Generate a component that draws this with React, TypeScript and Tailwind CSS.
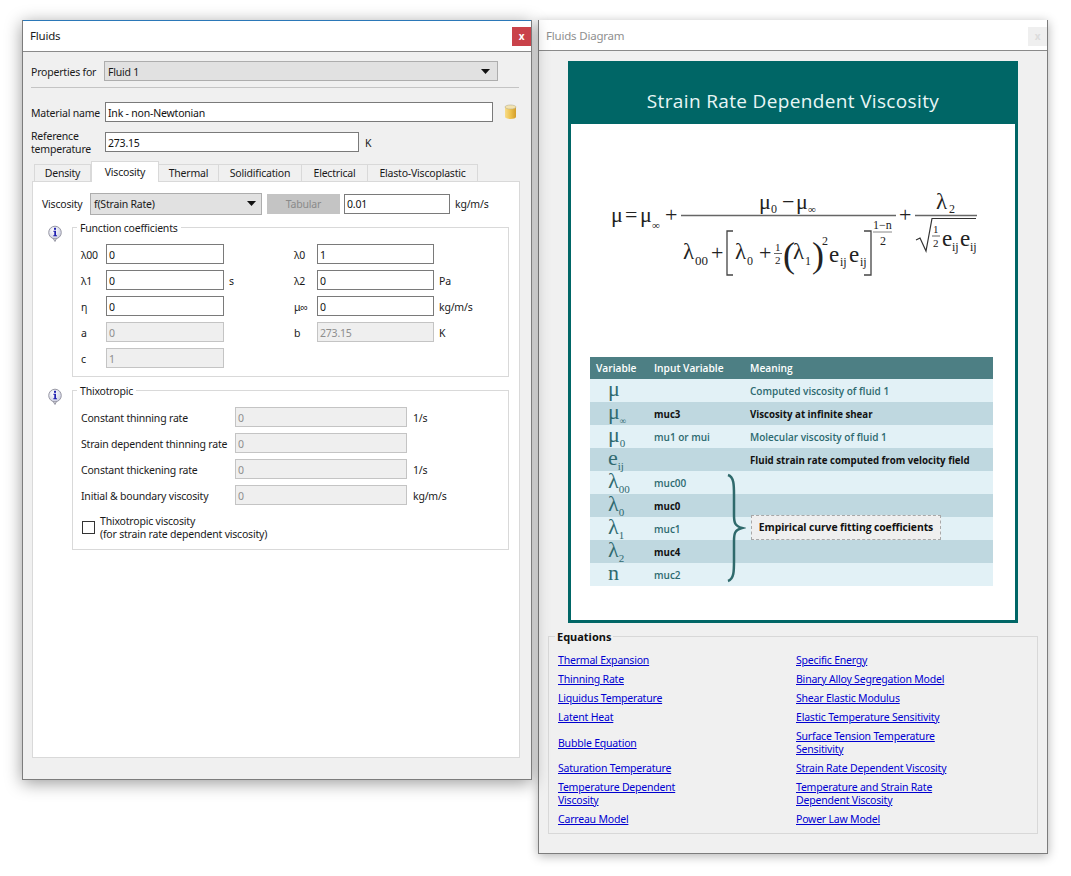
import React from "react";

function Info() {
  return (
    <svg width="16" height="18" viewBox="0 0 16 18" className="shrink-0">
      <defs>
        <radialGradient id="inf" cx="0.4" cy="0.35" r="0.7">
          <stop offset="0" stopColor="#ffffff" />
          <stop offset="1" stopColor="#c9cbe0" />
        </radialGradient>
      </defs>
      <path d="M5.5 12.5 L8 16.5 L10 12.5" fill="#dcdce4" stroke="#9a9aa6" strokeWidth="1" />
      <circle cx="8" cy="7.5" r="6.3" fill="url(#inf)" stroke="#9a9aa6" strokeWidth="1" />
      <rect x="7" y="2.8" width="2" height="2" fill="#1f1fb0" />
      <path d="M6.3 5.8 H9 V10.2 H10 V11.2 H6.3 V10.2 H7.3 V6.8 H6.3 Z" fill="#1f1fb0" />
    </svg>
  );
}

function Db() {
  return (
    <svg width="13" height="16" viewBox="0 0 13 16">
      <defs>
        <linearGradient id="cyl" x1="0" x2="1" y1="0" y2="0">
          <stop offset="0" stopColor="#f7dc8a" />
          <stop offset="0.5" stopColor="#eec24d" />
          <stop offset="1" stopColor="#d39d2a" />
        </linearGradient>
      </defs>
      <path d="M1 3 V13 C1 15.5 12 15.5 12 13 V3 Z" fill="url(#cyl)" />
      <ellipse cx="6.5" cy="3" rx="5.5" ry="2" fill="#f3e3b0" stroke="#b9b08f" strokeWidth="0.6" />
    </svg>
  );
}

function Caret() {
  return (
    <svg width="9" height="5" viewBox="0 0 9 5" className="shrink-0">
      <path d="M0 0 H9 L4.5 5 Z" fill="#111" />
    </svg>
  );
}

function Input({ value, w, disabled }: { value: string; w: string; disabled?: boolean }) {
  return (
    <div
      className={
        w +
        " h-[20px] shrink-0 border px-[2px] pt-[2px] flex items-center " +
        (disabled
          ? "bg-[#efefef] border-[#c4c4c4] text-[#8e8e8e]"
          : "bg-white border-[#7a7a7a] text-[#111]")
      }
    >
      {value}
    </div>
  );
}

function Tab({ label, w, active }: { label: string; w: string; active?: boolean }) {
  return active ? (
    <div className={w + " h-[21px] pt-[1px] -mb-px bg-white border border-b-0 border-[#d9d9d9] flex items-center justify-center z-10"}>
      {label}
    </div>
  ) : (
    <div className={w + " h-[17px] pt-[1px] bg-[#f0f0f0] border border-b-0 border-l-0 first:border-l border-[#d9d9d9] flex items-center justify-center"}>
      {label}
    </div>
  );
}

function CoefRow({
  l1, v1, u1, l2, v2, u2, disabled,
}: { l1: string; v1: string; u1?: string; l2?: string; v2?: string; u2?: string; disabled?: boolean }) {
  return (
    <div className="flex items-center h-[20px]">
      <div className="w-[25px] pt-[2px] shrink-0">{l1}</div>
      <Input value={v1} w="w-[118px]" disabled={disabled} />
      <div className="w-[70px] pl-[5px] pt-[2px] shrink-0">{u1}</div>
      {l2 && (
        <>
          <div className="w-[23px] pt-[2px] shrink-0">{l2}</div>
          <Input value={v2 || ""} w="w-[117px]" disabled={disabled} />
          <div className="pl-[5px] pt-[2px]">{u2}</div>
        </>
      )}
    </div>
  );
}

function ThixRow({ label, unit }: { label: string; unit?: string }) {
  return (
    <div className="flex items-center h-[20px]">
      <div className="w-[154px] pt-[2px] shrink-0 whitespace-nowrap">{label}</div>
      <Input value="0" w="w-[172px]" disabled />
      <div className="pl-[6px] pt-[2px]">{unit}</div>
    </div>
  );
}

function Formula() {
  const t = { fontFamily: "'Liberation Serif', serif", fill: "#222" } as const;
  const T = ({ x, y, s = 22, c }: { x: number; y: number; s?: number; c: string }) => (
    <text x={x} y={y} fontSize={s} style={t}>{c}</text>
  );
  return (
    <svg width="444" height="233" className="block tracking-normal">
      <g transform="translate(-571,-124)">
        <T x={611} y={222} c="μ" />
        <T x={625} y={222} c="=" />
        <T x={640} y={222} c="μ" />
        <T x={652} y={229} s={11} c="∞" />
        <T x={665} y={222} c="+" />
        <line x1="681" x2="896" y1="215.5" y2="215.5" stroke="#666" strokeWidth="1.4" />
        <T x={759} y={209} c="μ" />
        <T x={771} y={213} s={12} c="0" />
        <T x={782} y={209} c="−" />
        <T x={796} y={209} c="μ" />
        <T x={808} y={213} s={11} c="∞" />
        <T x={683} y={259} s={23} c="λ" />
        <T x={695} y={265} s={13} c="00" />
        <T x={711} y={260} c="+" />
        <path d="M733 231 H727 V275 H733" fill="none" stroke="#444" strokeWidth="1.3" />
        <T x={735} y={259} s={23} c="λ" />
        <T x={747} y={265} s={12} c="0" />
        <T x={759} y={260} c="+" />
        <T x={775} y={251} s={11} c="1" />
        <line x1="774" x2="782" y1="253.5" y2="253.5" stroke="#666" />
        <T x={775} y={264} s={11} c="2" />
        <text x={783} y={267} fontSize={36} style={t}>(</text>
        <T x={793} y={259} s={23} c="λ" />
        <T x={805} y={265} s={12} c="1" />
        <text x={812} y={267} fontSize={36} style={t}>)</text>
        <T x={822} y={245} s={12} c="2" />
        <T x={829} y={262} s={23} c="e" />
        <T x={840} y={266} s={12} c="ij" />
        <T x={849} y={262} s={23} c="e" />
        <T x={860} y={266} s={12} c="ij" />
        <path d="M864 231 H871 V275 H864" fill="none" stroke="#444" strokeWidth="1.3" />
        <T x={873} y={229} s={12} c="1−n" />
        <line x1="873" x2="892" y1="232" y2="232" stroke="#888" />
        <T x={880} y={245} s={12} c="2" />
        <T x={899} y={222} c="+" />
        <line x1="915" x2="977" y1="215.5" y2="215.5" stroke="#666" strokeWidth="1.4" />
        <T x={936} y={209} s={23} c="λ" />
        <T x={949} y={213} s={12} c="2" />
        <path d="M916 240 L920 238 L926 251 L932 218.5 H976" fill="none" stroke="#333" strokeWidth="1.2" />
        <T x={933} y={233} s={11} c="1" />
        <line x1="932" x2="940" y1="236" y2="236" stroke="#666" />
        <T x={933} y={247} s={11} c="2" />
        <T x={942} y={246} s={23} c="e" />
        <T x={952} y={251} s={12} c="ij" />
        <T x={960} y={246} s={23} c="e" />
        <T x={970} y={251} s={12} c="ij" />
      </g>
    </svg>
  );
}

function Sym({ c, sub, small }: { c: string; sub?: string; small?: boolean }) {
  return (
    <div
      className="w-[64px] shrink-0 pl-[18px] text-[22px] leading-[18px] h-[18px] font-normal text-[#2f6a70] whitespace-nowrap -mt-[4px]"
      style={{ fontFamily: "'Liberation Serif', serif" }}
    >
      {c}
      {sub && (
        <sub className={(small ? "text-[9px]" : "text-[11px]") + " align-[-3px] leading-none"}>{sub}</sub>
      )}
    </div>
  );
}

function Row({
  dark, c, sub, small, v, m,
}: { dark?: boolean; c: string; sub?: string; small?: boolean; v?: string; m?: string }) {
  return (
    <div
      className={
        "h-[23px] flex items-center " +
        (dark ? "bg-[#bfd8e0] text-[#111] text-[9.7px] font-bold" : "bg-[#e2f1f6] text-[#2d6a70] text-[10px] font-semibold")
      }
    >
      <Sym c={c} sub={sub} small={small} />
      <div className="w-[96px] shrink-0 pt-[1px]">{v}</div>
      <div className="whitespace-nowrap pt-[1px]">{m}</div>
    </div>
  );
}

function LinkT({ children }: { children: React.ReactNode }) {
  return <a className="text-[#0000d0] underline leading-[13px] block">{children}</a>;
}

export default function App() {
  return (
    <div
      className="relative w-[1071px] h-[876px] bg-white overflow-hidden text-[10.5px] tracking-[-0.2px] leading-[13px] text-[#1a1a1a]"
      style={{ fontFamily: "'Noto Sans', sans-serif" }}
    >
      {/* Right window */}
      <div className="absolute left-[538px] top-[20px] w-[510px] h-[834px] bg-[#f0f0f0] border border-t-0 border-[#7c7c7c] shadow-[0_2px_10px_rgba(0,0,0,0.3)] flex flex-col">
        <div className="h-[31px] bg-white border-b border-[#8a8a8a] flex items-center justify-between pl-[7px] shrink-0">
          <span className="text-[11.5px] text-[#8f8f8f]">Fluids Diagram</span>
          <div className="w-[19px] h-[19px] bg-[#efefef] flex items-center justify-center text-[10px] text-[#dcdcdc] font-bold mt-[2px]">x</div>
        </div>
        <div className="mt-[10px] ml-[29px] w-[450px] h-[562px] bg-[#006666] px-[3px] pb-[3px] flex flex-col shrink-0">
          <div
            className="h-[63px] shrink-0 pt-[28px] text-center text-[19px] leading-[24px] tracking-[0.35px] text-[#e8f6f6]"
            style={{ fontFamily: "'Open Sans', sans-serif" }}
          >
            Strain Rate Dependent Viscosity
          </div>
          <div className="flex-1 bg-white">
            <Formula />
            <div className="relative ml-[19px] w-[403px] tracking-normal" style={{ fontFamily: "'Open Sans', sans-serif" }}>
              <div className="h-[22px] bg-[#4d7f84] text-white font-semibold text-[10.2px] flex items-center">
                <div className="w-[64px] pl-[6px]">Variable</div>
                <div className="w-[96px]">Input Variable</div>
                <div>Meaning</div>
              </div>
              <Row c="μ" m="Computed viscosity of fluid 1" />
              <Row dark c="μ" sub="∞" small v="muc3" m="Viscosity at infinite shear" />
              <Row c="μ" sub="0" v="mu1 or mui" m="Molecular viscosity of fluid 1" />
              <Row dark c="e" sub="ij" m="Fluid strain rate computed from velocity field" />
              <Row c="λ" sub="00" v="muc00" />
              <Row dark c="λ" sub="0" v="muc0" />
              <Row c="λ" sub="1" v="muc1" />
              <Row dark c="λ" sub="2" v="muc4" />
              <Row c="n" v="muc2" />
              <svg className="absolute left-[136px] top-[116px]" width="20" height="110" viewBox="0 0 20 110">
                <path
                  d="M2 2 C8 4 8 12 8 22 L8 42 C8 50 9 53 16 55 C9 57 8 60 8 68 L8 88 C8 98 8 106 2 108"
                  fill="none"
                  stroke="#2f6a6c"
                  strokeWidth="2.5"
                />
              </svg>
              <div className="absolute left-[161px] top-[158px] w-[190px] h-[25px] bg-[#efefef] border border-dashed border-[#a8a8a8] flex items-center justify-center text-[10.4px] font-bold text-[#111] tracking-[-0.1px]">
                Empirical curve fitting coefficients
              </div>
            </div>
          </div>
        </div>
        <div className="relative mt-[13px] ml-[9px] w-[490px] h-[198px] border border-[#d8d8d8] pt-[17px] pl-[9px]">
          <div className="absolute left-[6px] -top-[7px] bg-[#f0f0f0] px-[2px] text-[11px] tracking-normal font-bold text-[#111]">Equations</div>
          <div className="grid grid-cols-[238px_1fr] gap-y-[6px] items-center">
            <LinkT>Thermal Expansion</LinkT>
            <LinkT>Specific Energy</LinkT>
            <LinkT>Thinning Rate</LinkT>
            <LinkT>Binary Alloy Segregation Model</LinkT>
            <LinkT>Liquidus Temperature</LinkT>
            <LinkT>Shear Elastic Modulus</LinkT>
            <LinkT>Latent Heat</LinkT>
            <LinkT>Elastic Temperature Sensitivity</LinkT>
            <LinkT>Bubble Equation</LinkT>
            <LinkT>Surface Tension Temperature<br />Sensitivity</LinkT>
            <LinkT>Saturation Temperature</LinkT>
            <LinkT>Strain Rate Dependent Viscosity</LinkT>
            <LinkT>Temperature Dependent<br />Viscosity</LinkT>
            <LinkT>Temperature and Strain Rate<br />Dependent Viscosity</LinkT>
            <LinkT>Carreau Model</LinkT>
            <LinkT>Power Law Model</LinkT>
          </div>
        </div>
      </div>

      {/* Left window */}
      <div className="absolute left-[22px] top-[20px] w-[510px] h-[760px] bg-[#f0f0f0] border border-t-0 border-[#7c7c7c] shadow-[0_3px_16px_rgba(0,0,0,0.4)] flex flex-col">
        <div className="h-[32px] bg-white border-t border-t-[#2b78b8] border-b border-b-[#8a8a8a] flex items-center justify-between pl-[7px] shrink-0">
          <span className="text-[11.5px] -mt-[1px]">Fluids</span>
          <div className="w-[19px] h-[19px] bg-[#c9424a] flex items-center justify-center text-[10px] text-white font-bold mt-[1px]">x</div>
        </div>
        <div className="flex-1 flex flex-col pl-[8px] pr-[12px] pt-[9px]">
          <div className="flex items-center h-[20px]">
            <div className="w-[73px] pt-[2px] shrink-0 whitespace-nowrap">Properties for</div>
            <div className="w-[394px] h-[20px] bg-[#e1e1e1] border border-[#adadad] flex items-center justify-between pl-[3px] pr-[7px]">
              <span className="pt-[2px]">Fluid 1</span>
              <Caret />
            </div>
          </div>
          <div className="h-px bg-[#c4c4c4] mt-[6px]" />
          <div className="flex items-center h-[20px] mt-[14px]">
            <div className="w-[74px] pt-[2px] shrink-0 whitespace-nowrap">Material name</div>
            <Input value="Ink - non-Newtonian" w="w-[388px]" />
            <div className="ml-[11px]"><Db /></div>
          </div>
          <div className="flex items-center h-[26px] mt-[7px]">
            <div className="w-[74px] pt-[2px] shrink-0">Reference<br />temperature</div>
            <Input value="273.15" w="w-[254px]" />
            <div className="pl-[6px] pt-[2px]">K</div>
          </div>
          <div className="flex items-end h-[22px] mt-[4px] pl-[3px]">
            <Tab label="Density" w="w-[57px]" />
            <Tab label="Viscosity" w="w-[68px]" active />
            <Tab label="Thermal" w="w-[60px]" />
            <Tab label="Solidification" w="w-[83px]" />
            <Tab label="Electrical" w="w-[66px]" />
            <Tab label="Elasto-Viscoplastic" w="w-[110px]" />
          </div>
          <div className="ml-[1px] w-[488px] h-[577px] bg-white border border-[#d9d9d9] pt-[11px] shrink-0">
            <div className="flex items-center h-[21px] pl-[9px]">
              <div className="w-[48px] pt-[2px] shrink-0">Viscosity</div>
              <div className="w-[172px] h-[22px] bg-[#e1e1e1] border border-[#adadad] flex items-center justify-between pl-[3px] pr-[5px] shrink-0">
                <span className="pt-[2px]">f(Strain Rate)</span>
                <Caret />
              </div>
              <div className="ml-[5px] w-[73px] h-[20px] pt-[2px] bg-[#c4c4c4] text-[#8a8a8a] flex items-center justify-center shrink-0">Tabular</div>
              <div className="ml-[4px]"><Input value="0.01" w="w-[106px]" /></div>
              <div className="pl-[5px] pt-[2px]">kg/m/s</div>
            </div>
            <div className="flex mt-[13px] pl-[14px] gap-[9px]">
              <div className="mt-[-2px]"><Info /></div>
              <div className="relative w-[437px] h-[150px] border border-[#d9d9d9] pl-[8px] pt-[16px] flex flex-col gap-[6px]">
                <div className="absolute left-[4px] -top-[6px] bg-white px-[3px]">Function coefficients</div>
                <CoefRow l1="λ00" v1="0" l2="λ0" v2="1" />
                <CoefRow l1="λ1" v1="0" u1="s" l2="λ2" v2="0" u2="Pa" />
                <CoefRow l1="η" v1="0" l2="μ∞" v2="0" u2="kg/m/s" />
                <CoefRow l1="a" v1="0" l2="b" v2="273.15" u2="K" disabled />
                <CoefRow l1="c" v1="1" disabled />
              </div>
            </div>
            <div className="flex mt-[13px] pl-[14px] gap-[9px]">
              <div className="mt-[-2px]"><Info /></div>
              <div className="relative w-[437px] h-[160px] border border-[#d9d9d9] pl-[8px] pt-[16px] flex flex-col gap-[6px]">
                <div className="absolute left-[4px] -top-[6px] bg-white px-[3px]">Thixotropic</div>
                <ThixRow label="Constant thinning rate" unit="1/s" />
                <ThixRow label="Strain dependent thinning rate" />
                <ThixRow label="Constant thickening rate" unit="1/s" />
                <ThixRow label="Initial & boundary viscosity" unit="kg/m/s" />
                <div className="flex items-center mt-[2px] pl-[1px]">
                  <div className="w-[13px] h-[13px] border border-[#333] bg-white shrink-0" />
                  <div className="ml-[5px] pt-[2px]">Thixotropic viscosity<br />(for strain rate dependent viscosity)</div>
                </div>
              </div>
            </div>
          </div>
        </div>
      </div>
    </div>
  );
}
